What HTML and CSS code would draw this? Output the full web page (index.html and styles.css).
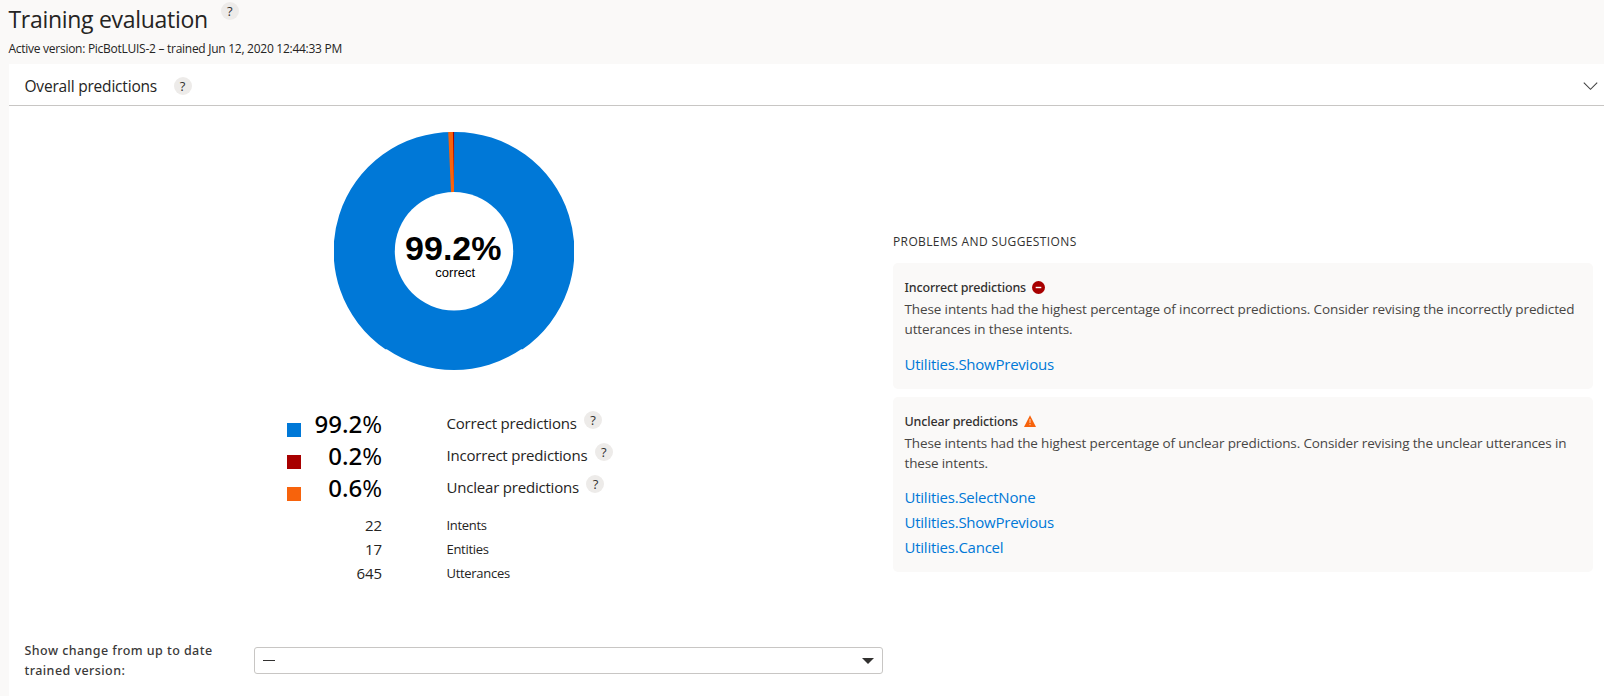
FILE: index.html
```
<!DOCTYPE html>
<html lang="en">
<head>
<meta charset="utf-8">
<title>Training evaluation</title>
<link rel="stylesheet" href="styles.css">
</head>
<body>
<header class="page-header">
  <div class="title-row"><h1 class="title">Training evaluation</h1><span class="help">?</span></div>
  <p class="subtitle">Active version: PicBotLUIS-2 – trained Jun 12, 2020 12:44:33 PM</p>
</header>
<main class="panel">
  <div class="panel-header">
    <h2 class="panel-title">Overall predictions</h2><span class="help">?</span>
    <svg class="chevron" width="15" height="9" viewBox="0 0 15 9"><path d="M.8 .6 7.5 7.3 14.2 .6" fill="none" stroke="#444" stroke-width="1.1"/></svg>
  </div>
  <div class="panel-body">
    <section class="overview">
      <svg class="donut" width="240" height="241" viewBox="0 0 240 241">
        <path fill="#0078d7" d="M120 1A119 119 0 0 1 188.6 218.2L187.2 218.2A119.3 119.3 0 0 1 52.8 218.2L51.4 218.2A119 119 0 0 1 120 1Z"/>
        <path fill="#f7630c" d="M114.2 1.1 120 1V64H117.2Z"/>
        <path fill="#a80000" d="M118.9 1H120.1L120 55Z"/>
        <circle cx="120" cy="120.2" r="59.2" fill="#fff"/>
        <text class="donut-value" x="119.3" y="129">99.2%</text>
        <text class="donut-label" x="121.2" y="146">correct</text>
      </svg>
      <div class="legend">
        <div class="legend-row"><i class="swatch blue"></i><span class="pct"><b>99.2</b>%</span><span class="name">Correct predictions</span><span class="help">?</span></div>
        <div class="legend-row"><i class="swatch red"></i><span class="pct"><b>0.2</b>%</span><span class="name">Incorrect predictions</span><span class="help">?</span></div>
        <div class="legend-row"><i class="swatch orange"></i><span class="pct"><b>0.6</b>%</span><span class="name">Unclear predictions</span><span class="help">?</span></div>
      </div>
      <div class="counts">
        <div class="count-row"><span class="count">22</span><span>Intents</span></div>
        <div class="count-row"><span class="count">17</span><span>Entities</span></div>
        <div class="count-row"><span class="count">645</span><span>Utterances</span></div>
      </div>
      <div class="compare">
        <label class="compare-label">Show change from up to date<br>trained version:</label>
        <div class="select"><i class="dash"></i><svg width="12" height="6" viewBox="0 0 12 6"><path d="M0 0H12L6 6Z" fill="#323130"/></svg></div>
      </div>
    </section>
    <section class="problems">
      <h3 class="problems-title">PROBLEMS AND SUGGESTIONS</h3>
      <article class="card">
        <h4 class="card-title">Incorrect predictions <svg width="13" height="13" viewBox="0 0 13 13"><circle cx="6.5" cy="6.5" r="6.5" fill="#a80000"/><path d="M3.7 6.5H9.3" stroke="#fff" stroke-width="1.4"/></svg></h4>
        <p class="desc">These intents had the highest percentage of incorrect predictions. Consider revising the incorrectly predicted<br>utterances in these intents.</p>
        <div class="links"><a>Utilities.ShowPrevious</a></div>
      </article>
      <article class="card card-unclear">
        <h4 class="card-title">Unclear predictions <svg width="12" height="12" viewBox="0 0 12 12"><path d="M6 .2 12 11.9H0Z" fill="#f7630c"/><path d="M6 4V8M6 9V10.2" stroke="#fbd0b5" stroke-width="1"/></svg></h4>
        <p class="desc desc-unclear">These intents had the highest percentage of unclear predictions. Consider revising the unclear utterances in<br>these intents.</p>
        <div class="links"><a>Utilities.SelectNone</a><a>Utilities.ShowPrevious</a><a>Utilities.Cancel</a></div>
      </article>
    </section>
  </div>
</main>
</body>
</html>
```

FILE: styles.css
```
* { box-sizing: border-box; margin: 0; }
body {
  height: 696px;
  overflow: hidden;
  background: #faf9f8;
  color: #252423;
  font-family: "Open Sans", "Noto Sans", sans-serif;
  display: flex;
  flex-direction: column;
}
h1, h2, h3, h4 { font-weight: 400; }
.page-header { height: 64px; padding: 3px 0 0 8.5px; }
.title-row { display: flex; height: 32px; }
.title { font-size: 23px; line-height: 32px; letter-spacing: -.3px; }
.title-row .help { margin: -1px 0 0 13px; }
.subtitle { margin-top: 6px; font-size: 12px; line-height: 16px; letter-spacing: -.27px; }
.help {
  flex: none;
  width: 18px;
  height: 18px;
  border-radius: 50%;
  background: #edebe9;
  color: #323130;
  font-size: 13px;
  line-height: 19px;
  text-align: center;
}
.panel { flex: 1; margin-left: 9px; background: #fff; }
.panel-header {
  display: flex;
  align-items: center;
  height: 42px;
  padding: 3px 6px 0 15.5px;
  border-bottom: 1px solid #c8c6c4;
}
.panel-title { font-size: 15.5px; line-height: 24px; letter-spacing: -.2px; }
.panel-header .help { margin-left: 16.5px; }
.chevron { margin-left: auto; }
.panel-body { display: flex; }
.overview { width: 884px; padding-top: 25px; }
.donut { display: block; margin-left: 325px; }
.donut-value, .donut-label { font-family: "Liberation Sans", Arial, sans-serif; text-anchor: middle; fill: #000; }
.donut-value { font-size: 34px; font-weight: 700; }
.donut-label { font-size: 13px; }
.legend { margin: 36px 0 0 278px; }
.legend-row { display: flex; height: 32px; line-height: 32px; }
.swatch { width: 14px; height: 14px; margin-top: 15px; }
.blue { background: #0078d7; }
.red { background: #a80000; }
.orange { background: #f7630c; }
.pct { width: 81px; margin-right: 64.5px; text-align: right; font-size: 24px; color: #000; }
.pct b { font-family: "Noto Sans", sans-serif; font-weight: 500; }
.name { margin-top: -1px; font-size: 15px; letter-spacing: -.2px; }
.legend .help { margin: 3px 0 0 7.5px; }
.counts { margin: 9px 0 0 278px; }
.count-row { display: flex; height: 24px; font-size: 13px; line-height: 24px; letter-spacing: -.3px; }
.count { width: 95px; margin-right: 64.5px; text-align: right; font-size: 15px; letter-spacing: -.1px; }
.compare { display: flex; margin: 56px 0 0 15.5px; }
.compare-label {
  width: 229.5px;
  font: 500 12.5px/20px "Noto Sans", sans-serif;
  letter-spacing: .44px;
  color: #3b3a39;
}
.select {
  display: flex;
  align-items: center;
  justify-content: space-between;
  width: 629px;
  height: 27px;
  margin-top: 6px;
  padding: 0 8px 0 8px;
  border: 1px solid #c8c6c4;
  border-radius: 3px;
}
.dash { width: 12px; height: 1px; background: #323130; }
.problems { width: 700px; padding-top: 128px; color: #323130; }
.problems-title { font-size: 12px; line-height: 16px; letter-spacing: .38px; }
.card { height: 126px; margin-top: 13px; padding: 15px 12px 0 11.5px; border-radius: 5px; background: #faf9f8; }
.card-unclear { height: 175px; margin-top: 8px; }
.card-title {
  display: flex;
  align-items: center;
  gap: 5.5px;
  font: 500 12.5px/20px "Noto Sans", sans-serif;
  letter-spacing: -.15px;
}
.card-title svg { margin-top: -2px; }
.desc { margin-top: 1px; font-size: 13.5px; line-height: 20px; letter-spacing: -.12px; white-space: nowrap; color: #484644; }
.desc-unclear { letter-spacing: -.14px; }
.links { display: flex; flex-direction: column; margin-top: 12px; }
.card:not(.card-unclear) .links { margin-top: 13px; }
.links a { font-size: 15px; line-height: 25px; letter-spacing: -.24px; color: #0078d7; }
```
